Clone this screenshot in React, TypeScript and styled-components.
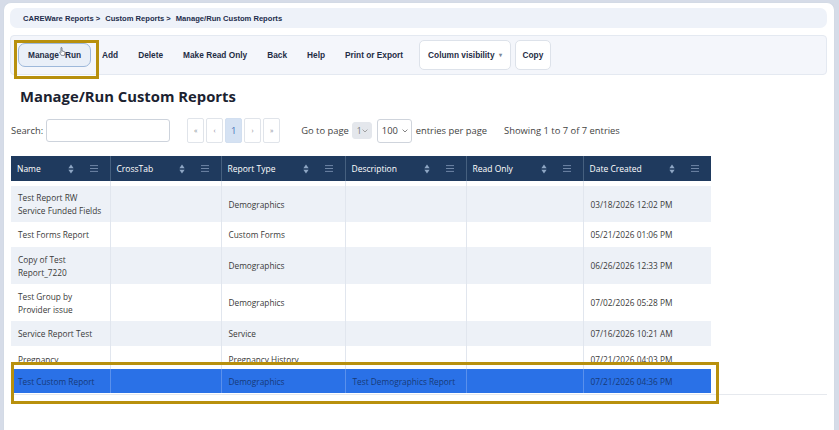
import React from "react";
import styled, { createGlobalStyle } from "styled-components";

const GlobalStyle = createGlobalStyle`
  html, body {
    margin: 0;
    padding: 0;
    background: #d6dce8;
  }
  body {
    font-family: "Open Sans", "Noto Sans", sans-serif;
    color: #333;
  }
`;

const Frame = styled.div`
  position: relative;
  width: 839px;
  height: 430px;
  overflow: hidden;
  padding: 2px 4px 0 3px;
  box-sizing: border-box;
`;

const Card = styled.div`
  height: 100%;
  background: #fff;
  border: 1px solid #d3dae5;
  border-bottom: none;
  border-radius: 8px 8px 0 0;
  padding: 5px 7px 0 6px;
  box-sizing: border-box;
`;

const Breadcrumb = styled.div`
  height: 20px;
  background: #eef2f9;
  border-radius: 7px;
  display: flex;
  align-items: center;
  gap: 5px;
  padding-left: 13px;
  font-family: "Liberation Sans", Arial, sans-serif;
  font-weight: 700;
  font-size: 7.6px;
  color: #1d2d4c;
`;

const Toolbar = styled.div`
  margin-top: 7px;
  height: 40px;
  box-sizing: border-box;
  background: #f4f6fb;
  border: 1px solid #e4e9f1;
  border-radius: 4px;
  display: flex;
  align-items: center;
  padding-left: 7px;
`;

const ToolButton = styled.button<{ $variant?: "active" | "boxed" }>`
  position: relative;
  font-family: "Liberation Sans", Arial, sans-serif;
  font-weight: 700;
  font-size: 8.3px;
  color: #1f2d45;
  background: ${(p) =>
    p.$variant === "active" ? "#e9eff8" : p.$variant === "boxed" ? "#fff" : "transparent"};
  border: 1px solid
    ${(p) =>
      p.$variant === "active" ? "#9db8da" : p.$variant === "boxed" ? "#dde2ea" : "transparent"};
  border-radius: ${(p) => (p.$variant === "active" ? "7px" : "5px")};
  height: ${(p) => (p.$variant === "boxed" ? "30px" : "24px")};
  padding: 0 ${(p) => (p.$variant === "boxed" ? "7px" : "9px")};
  margin-right: ${(p) => (p.$variant === "boxed" ? "4px" : "0")};
  display: flex;
  align-items: center;
  gap: 4px;
  cursor: pointer;
  white-space: nowrap;
`;

const Caret = styled.span`
  font-size: 6px;
  color: #7d8796;
  margin-top: -2px;
`;

const CursorGap = styled.span`
  position: relative;
  display: inline-block;
  width: 6px;
  height: 10px;
  svg {
    position: absolute;
    left: 0;
    top: -3px;
  }
`;

const Title = styled.h1`
  margin: 11px 0 0 10px;
  height: 22px;
  font-family: "Open Sans", sans-serif;
  font-size: 14.8px;
  font-weight: 700;
  color: #1b2230;
  line-height: 20px;
`;

const Controls = styled.div`
  margin: 10px 0 0 1px;
  height: 25px;
  display: flex;
  align-items: center;
  font-size: 9.4px;
  color: #444;
`;

const SearchInput = styled.input`
  width: 124px;
  height: 23px;
  box-sizing: border-box;
  margin-left: 3px;
  border: 1px solid #cdd3dc;
  border-radius: 3px;
`;

const Pager = styled.div`
  display: flex;
  gap: 2px;
  margin-left: 17px;
`;

const PageBtn = styled.div<{ $active?: boolean }>`
  width: 17px;
  height: 25px;
  box-sizing: border-box;
  border: 1px solid ${(p) => (p.$active ? "#d2dff0" : "#e0e4ea")};
  background: ${(p) => (p.$active ? "#d5e2f3" : "#fff")};
  color: ${(p) => (p.$active ? "#4a78bb" : "#8a8f98")};
  font-size: ${(p) => (p.$active ? "9.5px" : "7px")};
  border-radius: 2px;
  display: flex;
  align-items: center;
  justify-content: center;
`;

const Label = styled.span<{ $ml?: number }>`
  margin-left: ${(p) => p.$ml ?? 0}px;
  white-space: nowrap;
`;

const Select = styled.div<{ $muted?: boolean; $w: number }>`
  width: ${(p) => p.$w}px;
  height: ${(p) => (p.$muted ? 17 : 24)}px;
  box-sizing: border-box;
  margin: 0 4px 0 3px;
  background: ${(p) => (p.$muted ? "#e4e7ec" : "#fff")};
  border: 1px solid ${(p) => (p.$muted ? "#e4e7ec" : "#cfd4dc")};
  border-radius: 3px;
  display: flex;
  align-items: center;
  justify-content: space-between;
  padding: 0 3px 0 4px;
  color: ${(p) => (p.$muted ? "#777" : "#444")};
  font-size: ${(p) => (p.$muted ? "8.5px" : "9.4px")};
  svg {
    flex: none;
  }
`;

const TableWrap = styled.div`
  margin: 13px 0 0 1px;
  border-bottom: 1px solid #e6e9ee;
  padding-bottom: 1px;
`;

const Table = styled.table`
  width: 700px;
  border-collapse: collapse;
  table-layout: fixed;
  font-size: 8.3px;
`;

const Th = styled.th`
  height: 25px;
  background: #1f3a5e;
  color: #fff;
  font-weight: 400;
  text-align: left;
  padding: 0 0 0 6px;
  border-left: 1px solid #46607f;
  font-size: 8.5px;
  &:first-child {
    border-left: none;
  }
`;

const HeadInner = styled.div`
  display: flex;
  align-items: center;
  padding-right: 12px;
  span {
    flex: 1;
  }
`;

const Spacer = styled.tr`
  height: 5px;
  td {
    border-left: 1px solid #e1e6ee;
    padding: 0;
  }
  td:first-child {
    border-left: none;
  }
`;

const Tr = styled.tr<{ $striped: boolean; $selected?: boolean; $h: number; $pt?: number }>`
  height: ${(p) => p.$h}px;
  background: ${(p) => (p.$selected ? "#2a71e7" : p.$striped ? "#edf1f7" : "#fff")};
  color: ${(p) => (p.$selected ? "#173a78" : "#3a3a3a")};
  & > td {
    padding-top: ${(p) => p.$pt ?? 0}px;
    border-left-color: ${(p) => (p.$selected ? "#5a90ec" : "#e1e6ee")};
  }
`;

const Td = styled.td`
  padding: 0 6px 0 7px;
  line-height: 13px;
  border-left: 1px solid #e1e6ee;
  vertical-align: middle;
  &:first-child {
    border-left: none;
  }
`;

const Highlight = styled.div<{ $x: number; $y: number; $w: number; $h: number }>`
  position: absolute;
  left: ${(p) => p.$x}px;
  top: ${(p) => p.$y}px;
  width: ${(p) => p.$w}px;
  height: ${(p) => p.$h}px;
  box-sizing: border-box;
  border: 3px solid #b8900d;
  pointer-events: none;
`;

const SortIcon = () => (
  <svg width="6" height="10" viewBox="0 0 6 10" style={{ marginRight: 16 }}>
    <path d="M3 0.5 L5.6 4.3 H0.4 Z" fill="#8ea6c4" />
    <path d="M3 9.5 L5.6 5.7 H0.4 Z" fill="#8ea6c4" />
  </svg>
);

const MenuIcon = () => (
  <svg width="8" height="7" viewBox="0 0 8 7">
    <path d="M0 0.6 H8 M0 3.5 H8 M0 6.4 H8" stroke="#6f86a6" strokeWidth="1" />
  </svg>
);

const Chevron = ({ c = "#888" }: { c?: string }) => (
  <svg width="6" height="4" viewBox="0 0 6 4">
    <path d="M0.6 0.6 L3 3 L5.4 0.6" fill="none" stroke={c} strokeWidth="0.9" />
  </svg>
);

const HandCursor = () => (
  <svg width="7" height="9" viewBox="0 0 7 9">
    <path
      d="M2 0.6 C2.5 0.3 3 0.6 3 1.1 V4 L5.2 4.6 C5.9 4.8 6.2 5.3 6 6 L5.4 8.4 H2.4 L0.7 5.6 C0.5 5.1 1 4.7 1.5 5 L2 5.5 V1.1 Z"
      fill="#fff"
      stroke="#3b4456"
      strokeWidth="0.6"
    />
  </svg>
);

const columns = [
  { name: "Name", w: 99 },
  { name: "CrossTab", w: 111 },
  { name: "Report Type", w: 124 },
  { name: "Description", w: 121 },
  { name: "Read Only", w: 117 },
  { name: "Date Created", w: 128 },
];

type Row = {
  name: string[];
  type: string;
  desc?: string;
  date: string;
  h: number;
  pt?: number;
  selected?: boolean;
};

const rows: Row[] = [
  { name: ["Test Report RW", "Service Funded Fields"], type: "Demographics", date: "03/18/2026 12:02 PM", h: 36 },
  { name: ["Test Forms Report"], type: "Custom Forms", date: "05/21/2026 01:06 PM", h: 25 },
  { name: ["Copy of Test", "Report_7220"], type: "Demographics", date: "06/26/2026 12:33 PM", h: 37 },
  { name: ["Test Group by", "Provider issue"], type: "Demographics", date: "07/02/2026 05:28 PM", h: 37 },
  { name: ["Service Report Test"], type: "Service", date: "07/16/2026 10:21 AM", h: 25 },
  { name: ["Pregnancy"], type: "Pregnancy History", date: "07/21/2026 04:03 PM", h: 23, pt: 4 },
  {
    name: ["Test Custom Report"],
    type: "Demographics",
    desc: "Test Demographics Report",
    date: "07/21/2026 04:36 PM",
    h: 24,
    selected: true,
  },
];

const tools = ["Add", "Delete", "Make Read Only", "Back", "Help", "Print or Export"];

export default function App() {
  return (
    <>
      <GlobalStyle />
      <Frame>
        <Card>
          <Breadcrumb>
            <span>CAREWare Reports &gt;</span>
            <span>Custom Reports &gt;</span>
            <span>Manage/Run Custom Reports</span>
          </Breadcrumb>

          <Toolbar>
            <ToolButton $variant="active" style={{ marginRight: 1, gap: 0 }}>
              Manage
              <CursorGap>
                <HandCursor />
              </CursorGap>
              Run
            </ToolButton>
            {tools.map((t) => (
              <ToolButton key={t} style={t === "Print or Export" ? { marginRight: 6 } : undefined}>
                {t}
              </ToolButton>
            ))}
            <ToolButton $variant="boxed" style={{ paddingLeft: 8, paddingRight: 8 }}>
              Column visibility <Caret>▾</Caret>
            </ToolButton>
            <ToolButton $variant="boxed">Copy</ToolButton>
          </Toolbar>

          <Title>Manage/Run Custom Reports</Title>

          <Controls>
            <Label>Search:</Label>
            <SearchInput />
            <Pager>
              <PageBtn>«</PageBtn>
              <PageBtn>‹</PageBtn>
              <PageBtn $active>1</PageBtn>
              <PageBtn>›</PageBtn>
              <PageBtn>»</PageBtn>
            </Pager>
            <Label $ml={21}>Go to page</Label>
            <Select $muted $w={20}>
              1<Chevron c="#999" />
            </Select>
            <Select $w={35} style={{ marginLeft: 1 }}>
              100
              <Chevron c="#777" />
            </Select>
            <Label>entries per page</Label>
            <Label $ml={17}>Showing 1 to 7 of 7 entries</Label>
          </Controls>

          <TableWrap>
            <Table>
              <colgroup>
                {columns.map((c) => (
                  <col key={c.name} style={{ width: c.w }} />
                ))}
              </colgroup>
              <thead>
                <tr>
                  {columns.map((c) => (
                    <Th key={c.name}>
                      <HeadInner>
                        <span>{c.name}</span>
                        <SortIcon />
                        <MenuIcon />
                      </HeadInner>
                    </Th>
                  ))}
                </tr>
              </thead>
              <tbody>
                <Spacer>
                  {columns.map((c) => (
                    <td key={c.name} />
                  ))}
                </Spacer>
                {rows.map((r, i) => (
                  <Tr key={i} $h={r.h} $pt={r.pt} $striped={i % 2 === 0} $selected={r.selected}>
                    <Td>
                      {r.name.map((l, j) => (
                        <div key={j}>{l}</div>
                      ))}
                    </Td>
                    <Td />
                    <Td>{r.type}</Td>
                    <Td>{r.desc ?? ""}</Td>
                    <Td />
                    <Td>{r.date}</Td>
                  </Tr>
                ))}
              </tbody>
            </Table>
          </TableWrap>
        </Card>
        <Highlight $x={14} $y={40} $w={85} $h={39} />
        <Highlight $x={11} $y={362} $w={708} $h={42} />
      </Frame>
    </>
  );
}
